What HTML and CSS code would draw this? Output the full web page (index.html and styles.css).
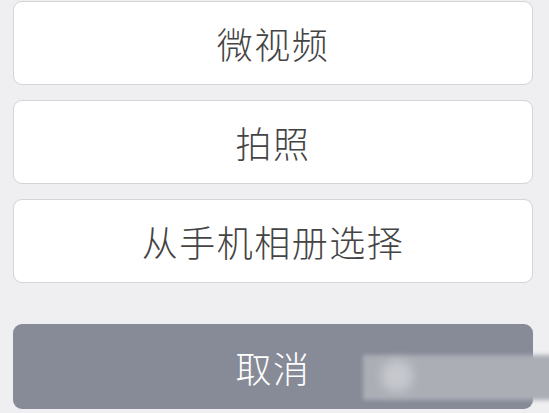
FILE: index.html
```html
<!DOCTYPE html>
<html lang="zh">
<head>
<meta charset="utf-8">
<link rel="stylesheet" href="styles.css">
</head>
<body>
<div class="sheet">
  <div class="group">
    <div class="btn">微视频</div>
    <div class="btn">拍照</div>
    <div class="btn">从手机相册选择</div>
  </div>
  <div class="btn cancel">取消</div>
</div>
<div class="watermark"><span class="dot"></span></div>
</body>
</html>
```
FILE: styles.css
```css
html, body {
  margin: 0;
  padding: 0;
  background: #efeff1;
  width: 549px;
  height: 413px;
  overflow: hidden;
}
.sheet {
  padding: 1px 16px 0 13px;
  display: flex;
  flex-direction: column;
  gap: 41px;
  font-family: "Noto Sans CJK SC", sans-serif;
}
.group {
  display: flex;
  flex-direction: column;
  gap: 15px;
}
.btn {
  height: 82px;
  border: 1px solid #d4d4d6;
  border-radius: 9px;
  background: #ffffff;
  color: #444444;
  font-size: 36px;
  font-weight: 300;
  display: flex;
  align-items: center;
  justify-content: center;
  letter-spacing: 1.5px;
}
.cancel {
  height: 85px;
  border: none;
  background: #878b97;
  color: #ffffff;
}
.watermark {
  position: absolute;
  left: 363px;
  top: 355px;
  width: 192px;
  height: 45px;
  background: #acaeb6;
  filter: blur(2px);
}
.dot {
  position: absolute;
  left: 18px;
  top: 5px;
  width: 32px;
  height: 32px;
  border-radius: 50%;
  background: #c6c8ce;
  filter: blur(5px);
}
```
